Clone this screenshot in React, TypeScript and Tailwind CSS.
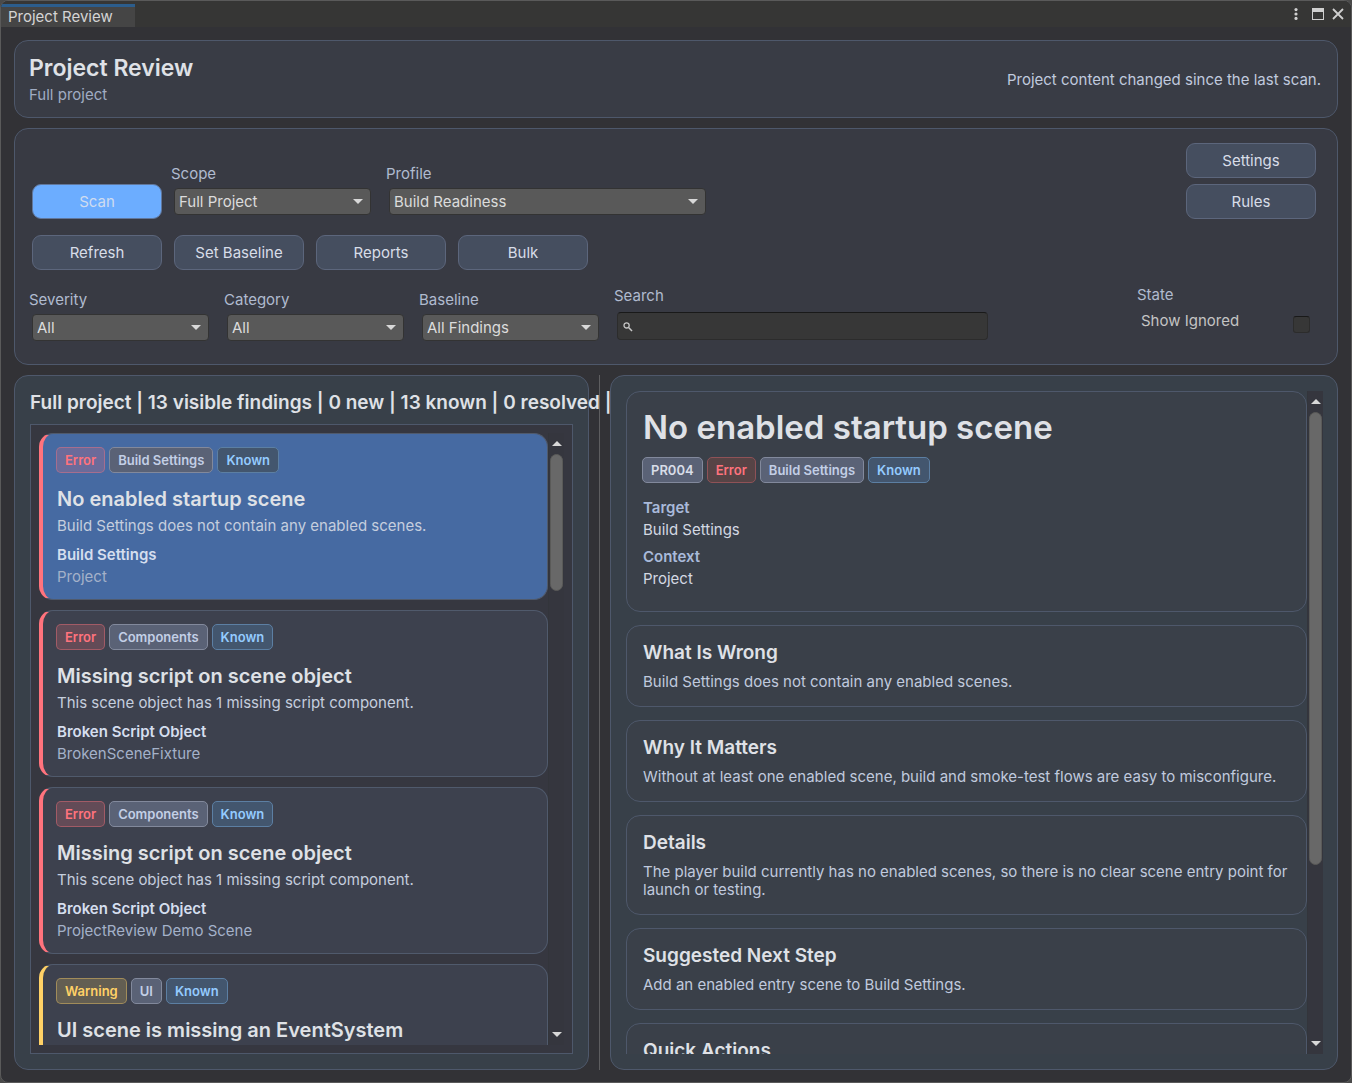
import React, { useState } from "react";

type Tone = "error" | "errorSolid" | "warning" | "neutral" | "known" | "code";

interface Finding {
  id: number;
  severity: "Error" | "Warning";
  category: string;
  title: string;
  message: string;
  target: string;
  context: string;
}

const findings: Finding[] = [
  {
    id: 1,
    severity: "Error",
    category: "Build Settings",
    title: "No enabled startup scene",
    message: "Build Settings does not contain any enabled scenes.",
    target: "Build Settings",
    context: "Project",
  },
  {
    id: 2,
    severity: "Error",
    category: "Components",
    title: "Missing script on scene object",
    message: "This scene object has 1 missing script component.",
    target: "Broken Script Object",
    context: "BrokenSceneFixture",
  },
  {
    id: 3,
    severity: "Error",
    category: "Components",
    title: "Missing script on scene object",
    message: "This scene object has 1 missing script component.",
    target: "Broken Script Object",
    context: "ProjectReview Demo Scene",
  },
  {
    id: 4,
    severity: "Warning",
    category: "UI",
    title: "UI scene is missing an EventSystem",
    message: "",
    target: "",
    context: "",
  },
];

const sections = [
  { title: "What Is Wrong", body: "Build Settings does not contain any enabled scenes." },
  {
    title: "Why It Matters",
    body: "Without at least one enabled scene, build and smoke-test flows are easy to misconfigure.",
  },
  {
    title: "Details",
    body: "The player build currently has no enabled scenes, so there is no clear scene entry point for launch or testing.",
  },
  { title: "Suggested Next Step", body: "Add an enabled entry scene to Build Settings." },
  { title: "Quick Actions", body: "" },
];

const tones: Record<Tone, string> = {
  error: "border-[#ff737d]/40 bg-[#ff737d]/20 text-[#ff737d]",
  errorSolid: "border-[#8f5257] bg-[#574446] text-[#ff737d]",
  warning: "border-[#ffd166]/40 bg-[#ffd166]/20 text-[#ffd166]",
  neutral: "border-[#82899c] bg-[#5a6276] text-[#c3cfe6]",
  known: "border-[#5c7fa3] bg-[#43566e] text-[#94cbff]",
  code: "border-[#82899c] bg-[#5a6276] text-[#d8dde8]",
};

function Badge({ tone, children }: { tone: Tone; children: React.ReactNode }) {
  return (
    <span className={`h-[26px] rounded-[5px] border px-2 text-[13px] leading-[24px] font-semibold whitespace-nowrap ${tones[tone]}`}>
      {children}
    </span>
  );
}

function Button({ children, primary }: { children: React.ReactNode; primary?: boolean }) {
  return (
    <button
      type="button"
      className={`h-[35px] w-[130px] rounded-[9px] border text-[15px] leading-5 ${
        primary ? "border-[#61779c] bg-[#6cadff] text-[#cfdcf0]" : "border-[#5c667c] bg-[#454e5f] text-[#d8dde8]"
      }`}
    >
      {children}
    </button>
  );
}

function SelectField({ id, label, value, width }: { id: string; label: string; value: string; width: string }) {
  return (
    <div className={width}>
      <label htmlFor={id} className="block text-[15px] leading-[22px] text-[#b0bbcf]">
        {label}
      </label>
      <div className="relative mt-[3px] ml-[3px]">
        <select
          id={id}
          defaultValue={value}
          className="block h-[27px] w-full appearance-none rounded-[4px] border border-[#333333] bg-[#595959] pl-1 text-[15px] leading-5 text-[#dcdcdc]"
        >
          <option>{value}</option>
        </select>
        <svg className="pointer-events-none absolute top-[11px] right-2" width="10" height="5" viewBox="0 0 10 5">
          <path d="M0 0h10L5 5z" fill="#d8d8d8" />
        </svg>
      </div>
    </div>
  );
}

function Scrollbar({ size }: { size: number }) {
  return (
    <div className="flex w-4 shrink-0 flex-col items-center border-l border-[#33353b] bg-[#35363e]">
      <div className="flex h-[21px] shrink-0 items-center">
        <svg width="10" height="5" viewBox="0 0 10 5">
          <path d="M5 0l5 5H0z" fill="#d8d8d8" />
        </svg>
      </div>
      <div className="w-full flex-1 px-px">
        <div className="w-full rounded-full border border-[#5a5a58] bg-[#686868]" style={{ height: `${size}%` }} />
      </div>
      <div className="flex h-[21px] shrink-0 items-center">
        <svg width="10" height="5" viewBox="0 0 10 5">
          <path d="M0 0h10L5 5z" fill="#d8d8d8" />
        </svg>
      </div>
    </div>
  );
}

function FindingCard({ finding, selected, onSelect }: { finding: Finding; selected: boolean; onSelect: () => void }) {
  const isError = finding.severity === "Error";
  return (
    <article
      onClick={onSelect}
      className={`shrink-0 rounded-[14px] border border-l-4 border-y-[#505a6c] border-r-[#505a6c] p-[13px] pb-3 ${
        isError ? "border-l-[#ff737d]" : "border-l-[#ffd166]"
      } ${selected ? "bg-[#466aa2]" : "bg-[#3d414e]"}`}
    >
      <div className="flex gap-1">
        <Badge tone={isError ? "error" : "warning"}>{finding.severity}</Badge>
        <Badge tone="neutral">{finding.category}</Badge>
        <Badge tone="known">Known</Badge>
      </div>
      <div className="mt-3.5 pl-px">
        <h3 className="text-[20px] leading-6 font-semibold text-[#dfe1e6]">{finding.title}</h3>
        <p className="mt-[5px] min-h-5 text-[#c5cede]">{finding.message}</p>
        <p className="mt-[9px] min-h-5 font-semibold text-[#d5deee]">{finding.target}</p>
        <p className="mt-0.5 min-h-5 text-[#a4b1c9]">{finding.context}</p>
      </div>
    </article>
  );
}

export default function App() {
  const [selectedId, setSelectedId] = useState(1);

  return (
    <div className="h-screen bg-[#4a4a4a] font-['Inter',sans-serif] text-[15px] leading-5">
      <div className="flex h-full flex-col overflow-hidden rounded-lg border border-[#5a5a5a] bg-[#323236]">
        <div className="flex h-[26px] shrink-0 items-stretch justify-between bg-[#363635]">
          <div className="mt-[3px] w-[134px] border-t-[3px] border-[#2c5d8c] bg-[#454545] pl-[7px] text-[#d4d4d4]">
            Project Review
          </div>
          <div className="flex items-center gap-2 pr-[7px]">
            <button type="button" aria-label="More options" className="pr-1.5">
              <svg width="4" height="12" viewBox="0 0 4 12" fill="#cfcfcf">
                <circle cx="2" cy="1.6" r="1.6" />
                <circle cx="2" cy="6" r="1.6" />
                <circle cx="2" cy="10.4" r="1.6" />
              </svg>
            </button>
            <button type="button" aria-label="Maximize">
              <svg width="12" height="12" viewBox="0 0 12 12">
                <path d="M0 0h12v12H0zM1 4v7h10V4z" fill="#cfcfcf" fillRule="evenodd" />
              </svg>
            </button>
            <button type="button" aria-label="Close">
              <svg width="12" height="12" viewBox="0 0 12 12">
                <path d="M1 1l10 10M11 1L1 11" stroke="#cfcfcf" strokeWidth="1.8" />
              </svg>
            </button>
          </div>
        </div>

        <main className="flex min-h-0 flex-1 flex-col gap-2.5 p-[13px] pb-3">
          <header className="flex shrink-0 items-center justify-between rounded-[14px] border border-[#4e586b] bg-[#393c45] pt-[13px] pr-4 pb-3 pl-3.5">
            <div>
              <h1 className="text-[23px] leading-7 font-semibold text-[#dfe1e6]">Project Review</h1>
              <p className="mt-[3px] text-[#a0acc3]">Full project</p>
            </div>
            <p className="text-[#c0cade]">Project content changed since the last scan.</p>
          </header>

          <section className="shrink-0 rounded-[14px] border border-[#4e586b] bg-[#383a43] pt-3.5 pr-[21px] pb-[23px] pl-3.5">
            <div className="flex items-end justify-between">
              <div className="flex items-end">
                <div className="pr-[9px] pl-[3px]">
                  <Button primary>Scan</Button>
                </div>
                <div className="flex gap-[15px] pb-1">
                  <SelectField id="scope" label="Scope" value="Full Project" width="w-[200px]" />
                  <SelectField id="profile" label="Profile" value="Build Readiness" width="w-[320px]" />
                </div>
              </div>
              <div className="flex flex-col gap-1.5">
                <Button>Settings</Button>
                <Button>Rules</Button>
              </div>
            </div>

            <div className="mt-4 flex gap-3 pl-[3px]">
              <Button>Refresh</Button>
              <Button>Set Baseline</Button>
              <Button>Reports</Button>
              <Button>Bulk</Button>
            </div>

            <div className="mt-[15px] flex justify-between">
              <div className="flex items-end gap-[15px]">
                <SelectField id="severity" label="Severity" value="All" width="w-[180px]" />
                <SelectField id="category" label="Category" value="All" width="w-[180px]" />
                <SelectField id="baseline" label="Baseline" value="All Findings" width="w-[180px]" />
                <div className="w-[374px] pb-px">
                  <label htmlFor="search" className="block leading-[22px] text-[#b0bbcf]">
                    Search
                  </label>
                  <div className="relative mt-[5px] ml-[3px]">
                    <input
                      id="search"
                      type="text"
                      className="block h-[28px] w-full rounded-[4px] border border-[#2c2c2c] border-t-[#191919] bg-[#373737] pl-5 text-[#d4d4d4]"
                    />
                    <svg className="pointer-events-none absolute top-2.5 left-1.5" width="10" height="10" viewBox="0 0 10 10" fill="none" stroke="#c8c8c8">
                      <circle cx="3.6" cy="3.4" r="2.6" strokeWidth="1.3" />
                      <path d="M5.6 5.4L9 9" strokeWidth="1.5" />
                    </svg>
                  </div>
                </div>
              </div>
              <div className="w-[179px]">
                <p className="text-[#b0bbcf]">State</p>
                <div className="mt-1.5 flex items-start justify-between pr-1.5 pl-1">
                  <label htmlFor="show-ignored" className="text-[#c4c4c4]">
                    Show Ignored
                  </label>
                  <input
                    id="show-ignored"
                    type="checkbox"
                    className="mt-[5px] h-[17px] w-[17px] appearance-none rounded-[3px] border border-[#2c2c2c] border-t-[#191919] bg-[#373737]"
                  />
                </div>
              </div>
            </div>
          </section>

          <div className="grid min-h-0 flex-1 grid-cols-[575fr_1px_728fr] grid-rows-[minmax(0,1fr)] gap-2.5">
            <section className="flex min-w-0 flex-col rounded-[14px] border border-[#4e586b] bg-[#384049] p-[15px]">
              <h2 className="shrink-0 text-[19px] leading-6 font-semibold whitespace-nowrap text-[#dfe1e6]">
                <span className="relative z-10">Full project | 13 visible findings | 0 new | 13 known | 0 resolved |</span>
              </h2>
              <div className="mt-[9px] flex min-h-0 flex-1 border border-[#4e586b] bg-[#363740] p-2">
                <div className="flex min-w-0 flex-1 flex-col gap-2.5 overflow-hidden">
                  {findings.map((finding) => (
                    <FindingCard
                      key={finding.id}
                      finding={finding}
                      selected={finding.id === selectedId}
                      onSelect={() => setSelectedId(finding.id)}
                    />
                  ))}
                </div>
                <Scrollbar size={24} />
              </div>
            </section>

            <div className="bg-[#5e5e60]" />

            <section className="flex min-w-0 rounded-[14px] border border-[#4e586b] bg-[#384049] p-[15px] pr-3.5">
              <div className="flex min-w-0 flex-1 flex-col gap-[13px] overflow-hidden">
                <div className="shrink-0 rounded-[14px] border border-[#4e586b] bg-[#3a4049] p-[15px] pb-[22px]">
                  <h2 className="pl-px text-[33px] leading-10 font-semibold text-[#dfe1e6]">No enabled startup scene</h2>
                  <div className="mt-2.5 flex gap-1">
                    <Badge tone="code">PR004</Badge>
                    <Badge tone="errorSolid">Error</Badge>
                    <Badge tone="neutral">Build Settings</Badge>
                    <Badge tone="known">Known</Badge>
                  </div>
                  <dl className="mt-[15px] pl-px">
                    <dt className="font-semibold text-[#a9bada]">Target</dt>
                    <dd className="mt-0.5 text-[#d4d9e3]">Build Settings</dd>
                    <dt className="mt-[7px] font-semibold text-[#a9bada]">Context</dt>
                    <dd className="mt-0.5 text-[#d4d9e3]">Project</dd>
                  </dl>
                </div>
                {sections.map((section) => (
                  <div key={section.title} className="shrink-0 rounded-[14px] border border-[#4e586b] bg-[#3a4049] px-4 py-[15px]">
                    <h3 className="text-[19px] leading-6 font-semibold text-[#dfe1e6]">{section.title}</h3>
                    <p className="mt-2 min-h-[18px] leading-[18px] text-[#c0cade]">{section.body}</p>
                  </div>
                ))}
              </div>
              <Scrollbar size={73} />
            </section>
          </div>
        </main>
      </div>
    </div>
  );
}
